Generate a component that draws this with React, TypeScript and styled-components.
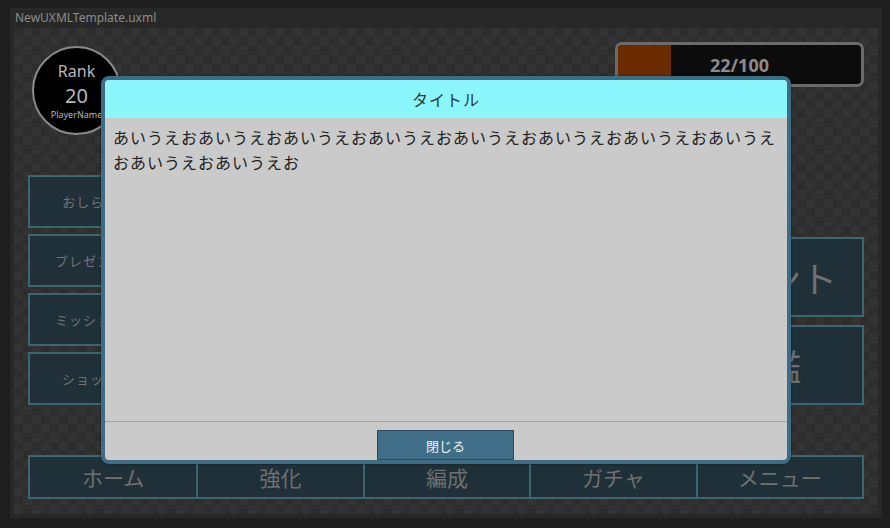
import React from 'react';
import styled, { createGlobalStyle } from 'styled-components';

const GlobalStyle = createGlobalStyle`
  html, body {
    margin: 0;
    padding: 0;
    background: #1e1e1e;
  }
  body {
    font-family: "Noto Sans", "Noto Sans CJK JP", sans-serif;
  }
`;

const sideMenu = ['おしらせ', 'プレゼント', 'ミッション', 'ショップ'];
const bigMenu = ['イベント', '図鑑'];
const tabs = ['ホーム', '強化', '編成', 'ガチャ', 'メニュー'];
const bodyText = 'あいうえお'.repeat(10);

const App = () => {
  const stamina = 22;
  const maxStamina = 100;

  return (
    <>
      <GlobalStyle />
      <Window>
        <TitleBar>NewUXMLTemplate.uxml</TitleBar>
        <Canvas>
          <TopRow>
            <RankBadge>
              <RankLabel>Rank</RankLabel>
              <RankValue>20</RankValue>
              <PlayerName>PlayerName</PlayerName>
            </RankBadge>
            <StaminaBar>
              <StaminaFill style={{ width: `${(stamina / maxStamina) * 100}%` }} />
              <StaminaText>{stamina}/{maxStamina}</StaminaText>
            </StaminaBar>
          </TopRow>

          <MiddleRow>
            <SideColumn>
              {sideMenu.map((item) => (
                <SideButton key={item}>{item}</SideButton>
              ))}
            </SideColumn>
            <BigColumn>
              {bigMenu.map((item) => (
                <BigButton key={item}>{item}</BigButton>
              ))}
            </BigColumn>
          </MiddleRow>

          <TabBar>
            {tabs.map((tab) => (
              <Tab key={tab}>{tab}</Tab>
            ))}
          </TabBar>

          <Modal>
            <ModalHeader>タイトル</ModalHeader>
            <ModalBody>{bodyText}</ModalBody>
            <ModalFooter>
              <CloseButton>閉じる</CloseButton>
            </ModalFooter>
          </Modal>
        </Canvas>
      </Window>
    </>
  );
};

const Window = styled.div`
  margin: 8px 8px 0 10px;
  height: 510px;
  background: #282828;
  display: flex;
  flex-direction: column;
`;

const TitleBar = styled.div`
  height: 20px;
  line-height: 19px;
  padding-left: 5px;
  font-family: "Noto Sans", sans-serif;
  font-size: 12px;
  color: #8c8c8c;
`;

const Canvas = styled.div`
  position: relative;
  flex: 1;
  margin: 0 4px 4px 4px;
  padding: 14px 14px 15px 14px;
  box-sizing: border-box;
  display: flex;
  flex-direction: column;
  background-color: #2d2d2d;
  background-image:
    linear-gradient(45deg, #333333 25%, transparent 25%, transparent 75%, #333333 75%),
    linear-gradient(45deg, #333333 25%, transparent 25%, transparent 75%, #333333 75%);
  background-size: 18px 18px;
  background-position: 0 0, 9px 9px;
`;

const TopRow = styled.div`
  height: 93px;
  display: flex;
  justify-content: space-between;
  align-items: flex-start;
`;

const RankBadge = styled.div`
  width: 89px;
  height: 89px;
  margin: 4px 0 0 4px;
  box-sizing: border-box;
  border: 2px solid #8a8a8a;
  border-radius: 50%;
  background: #000;
  display: flex;
  flex-direction: column;
  align-items: center;
  padding-top: 12px;
  color: #b8b8b8;
`;

const RankLabel = styled.div`
  font-size: 16px;
  line-height: 22px;
`;

const RankValue = styled.div`
  font-size: 20px;
  line-height: 27px;
`;

const PlayerName = styled.div`
  font-size: 9px;
  line-height: 12px;
`;

const StaminaBar = styled.div`
  position: relative;
  width: 249px;
  height: 45px;
  box-sizing: border-box;
  border: 3px solid #6b6b6b;
  border-radius: 7px;
  background: #0c0c0c;
  overflow: hidden;
`;

const StaminaFill = styled.div`
  height: 100%;
  background: #6a2b00;
`;

const StaminaText = styled.div`
  position: absolute;
  inset: 0;
  display: flex;
  align-items: center;
  justify-content: center;
  font-family: "Noto Sans", sans-serif;
  font-weight: bold;
  font-size: 18px;
  color: #8b8b8b;
`;

const MiddleRow = styled.div`
  margin-top: 40px;
  display: flex;
  justify-content: space-between;
  align-items: flex-end;
`;

const SideColumn = styled.div`
  display: flex;
  flex-direction: column;
  gap: 6px;
`;

const SideButton = styled.div`
  width: 124px;
  height: 53px;
  box-sizing: border-box;
  border: 2px solid #3b6670;
  background: #1f3039;
  display: flex;
  align-items: center;
  justify-content: center;
  font-family: "Noto Sans CJK JP", sans-serif;
  font-size: 13px;
  letter-spacing: 1px;
  color: #737373;
`;

const BigColumn = styled.div`
  display: flex;
  flex-direction: column;
  gap: 8px;
`;

const BigButton = styled.div`
  width: 198px;
  height: 80px;
  box-sizing: border-box;
  border: 2px solid #3b6670;
  background: #1f3039;
  display: flex;
  align-items: center;
  justify-content: center;
  font-family: "Noto Sans CJK JP", sans-serif;
  font-size: 36px;
  color: #707070;
`;

const TabBar = styled.div`
  margin-top: 50px;
  height: 44px;
  box-sizing: border-box;
  border: 2px solid #3b6670;
  background: #1f3039;
  display: grid;
  grid-template-columns: repeat(5, 1fr);
`;

const Tab = styled.div`
  display: flex;
  align-items: center;
  justify-content: center;
  border-left: 2px solid #3b6670;
  font-family: "Noto Sans CJK JP", sans-serif;
  font-size: 21px;
  color: #707070;

  &:first-child {
    border-left: none;
  }
`;

const Modal = styled.div`
  position: absolute;
  left: 87px;
  top: 48px;
  width: 690px;
  height: 388px;
  box-sizing: border-box;
  border: 4px solid #3d6c84;
  border-radius: 8px;
  background: #cacaca;
  overflow: hidden;
  display: flex;
  flex-direction: column;
  box-shadow: 0 0 2px rgba(0, 0, 0, 0.6);
`;

const ModalHeader = styled.div`
  height: 38px;
  flex-shrink: 0;
  background: #8cf6fd;
  display: flex;
  align-items: center;
  justify-content: center;
  font-family: "Noto Sans CJK JP", sans-serif;
  font-size: 16px;
  color: #2e3a40;
  letter-spacing: 1px;
`;

const ModalBody = styled.div`
  flex: 1;
  padding: 7px 8px 0 8px;
  font-family: "Noto Sans CJK JP", sans-serif;
  font-size: 16px;
  line-height: 25px;
  letter-spacing: 1px;
  color: #222;
  word-break: break-all;
`;

const ModalFooter = styled.div`
  height: 38px;
  flex-shrink: 0;
  border-top: 1px solid #a2a2a2;
  display: flex;
  align-items: flex-end;
  justify-content: center;
`;

const CloseButton = styled.button`
  width: 137px;
  height: 30px;
  margin-left: -1px;
  border: 1px solid #2b4b5c;
  background: #3f6f88;
  color: #f0f0f0;
  font-family: "Noto Sans CJK JP", sans-serif;
  font-size: 13px;
  padding: 0;
  cursor: pointer;
`;

export default App;
